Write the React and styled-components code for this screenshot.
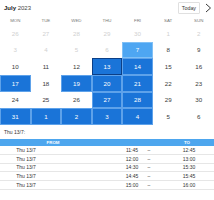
import styled, { createGlobalStyle } from "styled-components";

const Global = createGlobalStyle`
    body {
        margin: 0;
        background: #fff;
        font-family: "Liberation Sans", Arial, sans-serif;
        color: #333;
        -webkit-font-smoothing: antialiased;
    }
`;

const weeks = [
    [26, 27, 28, 29, 30, 1, 2],
    [3, 4, 5, 6, 7, 8, 9],
    [10, 11, 12, 13, 14, 15, 16],
    [17, 18, 19, 20, 21, 22, 23],
    [24, 25, 26, 27, 28, 29, 30],
    [31, 1, 2, 3, 4, 5, 6],
];

const dayNames = ["MON", "TUE", "WED", "THU", "FRI", "SAT", "SUN"];

// state per cell: muted, light, active, selected
const cellState = (w, d) => {
    if (w === 0 || (w === 1 && d < 4)) return "muted";
    if (w === 1 && d === 4) return "light";
    if (w === 2 && d === 3) return "active";
    const sel = {
        2: [4],
        3: [0, 2, 3, 4],
        4: [3, 4],
        5: [0, 1, 2, 3, 4],
    };
    if (sel[w] && sel[w].includes(d)) return "selected";
    return "normal";
};

const slots = [
    ["11:45", "12:45"],
    ["12:00", "13:00"],
    ["14:30", "15:30"],
    ["14:45", "15:45"],
    ["15:00", "16:00"],
];

function App() {
    return (
        <Screen>
            <Global />
            <TopBar>
                <Month>
                    <b>July</b> 2023
                </Month>
                <Nav>
                    <TodayButton>Today</TodayButton>
                    <Arrow viewBox="0 0 8 10">
                        <path d="M2 1 L6.5 5 L2 9" fill="none" stroke="#222" strokeWidth="0.9" />
                    </Arrow>
                </Nav>
            </TopBar>
            <DayNames>
                {dayNames.map((n) => (
                    <DayName key={n}>{n}</DayName>
                ))}
            </DayNames>
            <Grid>
                {weeks.map((week, w) =>
                    week.map((day, d) => (
                        <Cell key={`${w}-${d}`} $state={cellState(w, d)}>
                            {day}
                        </Cell>
                    ))
                )}
            </Grid>
            <Caption>Thu 13/7:</Caption>
            <Table>
                <HeadRow>
                    <HeadCell>FROM</HeadCell>
                    <span />
                    <HeadCell>TO</HeadCell>
                </HeadRow>
                {slots.map(([from, to]) => (
                    <Row key={from}>
                        <Cell2>Thu 13/7</Cell2>
                        <span />
                        <Cell2>{from}</Cell2>
                        <Cell2>–</Cell2>
                        <span />
                        <Cell2>{to}</Cell2>
                    </Row>
                ))}
            </Table>
        </Screen>
    );
}

const Screen = styled.div`
    width: 214px;
    height: 200px;
    overflow: hidden;
`;

const TopBar = styled.div`
    height: 15px;
    display: flex;
    align-items: center;
    justify-content: space-between;
    padding: 0 2px 0 4px;
`;

const Month = styled.div`
    font-size: 6px;
    color: #444;
    b {
        font-weight: 700;
        color: #222;
    }
`;

const Nav = styled.div`
    display: flex;
    align-items: center;
    gap: 4px;
`;

const TodayButton = styled.div`
    font-size: 5.3px;
    color: #333;
    border: 1px solid #e0e0e0;
    border-radius: 1px;
    padding: 2px 3px;
    line-height: 6px;
`;

const Arrow = styled.svg`
    width: 8px;
    height: 10px;
`;

const DayNames = styled.div`
    height: 10px;
    display: grid;
    grid-template-columns: repeat(7, 1fr);
    align-items: center;
`;

const DayName = styled.div`
    text-align: center;
    font-size: 4.4px;
    color: #777;
`;

const Grid = styled.div`
    height: 100px;
    display: grid;
    grid-template-columns: repeat(7, 1fr);
    grid-template-rows: repeat(6, 1fr);
`;

const cellColors = {
    muted: { bg: "transparent", fg: "#d0d0d0", border: "transparent" },
    normal: { bg: "transparent", fg: "#3a3a3a", border: "transparent" },
    light: { bg: "#4ea6f2", fg: "#fff", border: "#80c0f6" },
    selected: { bg: "#1a74d8", fg: "#fff", border: "#5ea2ea" },
    active: { bg: "#1a74d8", fg: "#fff", border: "#0c3f86" },
};

const Cell = styled.div`
    display: flex;
    align-items: center;
    justify-content: center;
    font-size: 6.2px;
    background: ${(p) => cellColors[p.$state].bg};
    color: ${(p) => cellColors[p.$state].fg};
    box-shadow: inset 0 0 0 1px ${(p) => cellColors[p.$state].border};
`;

const Caption = styled.div`
    height: 14px;
    display: flex;
    align-items: center;
    padding-left: 4px;
    font-size: 5px;
    color: #333;
`;

const Table = styled.div`
    display: flex;
    flex-direction: column;
`;

const HeadRow = styled.div`
    height: 7px;
    display: grid;
    grid-template-columns: 106px 54px 54px;
    background: #4da6ee;
`;

const HeadCell = styled.div`
    text-align: center;
    font-size: 4.4px;
    line-height: 7px;
    font-weight: 700;
    color: #fff;
`;

const Row = styled.div`
    height: 8.8px;
    display: grid;
    grid-template-columns: 52px 68px 24px 10px 10px 50px;
    align-items: center;
    border-bottom: 1px solid #e6e6e6;
    box-sizing: border-box;
`;

const Cell2 = styled.div`
    font-size: 5px;
    color: #333;
    text-align: center;
`;

export default App;
